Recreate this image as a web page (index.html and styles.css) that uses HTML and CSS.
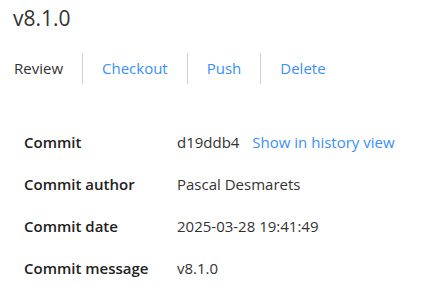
FILE: index.html
```html
<!DOCTYPE html>
<html lang="en">
<head>
  <meta charset="UTF-8" />
  <title>v8.1.0</title>
  <link rel="stylesheet" href="styles.css">
</head>
<body>
  <h1 class="title">v8.1.0</h1>

  <div class="tabs">
    <span class="tab active">Review</span>
    <a class="tab">Checkout</a>
    <a class="tab">Push</a>
    <a class="tab">Delete</a>
  </div>

  <table class="details">
    <tr>
      <th>Commit</th>
      <td>d19ddb4 <a class="link">Show in history view</a></td>
    </tr>
    <tr>
      <th>Commit author</th>
      <td>Pascal Desmarets</td>
    </tr>
    <tr>
      <th>Commit date</th>
      <td>2025-03-28 19:41:49</td>
    </tr>
    <tr>
      <th>Commit message</th>
      <td>v8.1.0</td>
    </tr>
  </table>
</body>
</html>
```

FILE: styles.css
```css
body {
  margin: 0;
  font-family: 'Open Sans', sans-serif;
  color: #333;
  background: #fff;
}
.title {
  font-size: 21px;
  font-weight: 400;
  margin: 0;
  padding: 4px 13px 0;
}
.tabs {
  display: flex;
  margin-top: 21px;
  padding-left: 14px;
  font-size: 15px;
}
.tab {
  padding: 0 19px;
  height: 31px;
  line-height: 31px;
  border-left: 1px solid #d0d0d0;
  color: #3b8ff5;
}
.tab.active {
  padding-left: 0;
  border-left: none;
  color: #333;
}
.details {
  margin: 37px 0 0 10px;
  border-collapse: collapse;
  font-size: 15px;
}
.details th {
  text-align: left;
  font-weight: 600;
  color: #222;
  width: 153px;
  padding: 0 0 0 14px;
  height: 42px;
}
.details td {
  padding: 0;
}
.link {
  color: #3b8ff5;
  margin-left: 9px;
}
```
